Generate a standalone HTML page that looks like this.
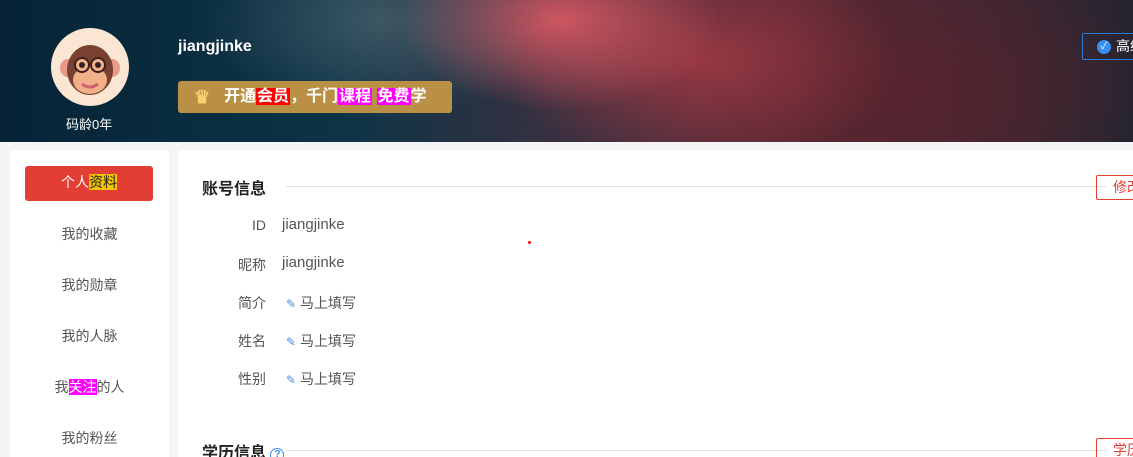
<!DOCTYPE html>
<html><head><meta charset="utf-8"><style>
*{margin:0;padding:0;box-sizing:border-box}
body{width:1133px;height:457px;overflow:hidden;background:#f4f5f7;font-family:"Liberation Sans","Noto Sans CJK SC",sans-serif;position:relative}
.ban{position:absolute;left:0;top:0;width:1133px;height:142px;background:
radial-gradient(ellipse 160px 90px at 560px 20px,rgba(220,90,100,.9),transparent),
radial-gradient(ellipse 200px 110px at 700px 60px,rgba(170,60,70,.8),transparent),
radial-gradient(ellipse 180px 100px at 380px 20px,rgba(90,110,120,.6),transparent),
radial-gradient(ellipse 250px 140px at 900px 90px,rgba(90,35,45,.8),transparent),
linear-gradient(90deg,#062336 0%,#0c3446 30%,#3a3040 50%,#5a2a36 70%,#3a2630 90%,#252530 100%)}
.av{position:absolute;left:51px;top:28px;width:78px;height:78px;border-radius:50%;background:#fbe6d3}
.t{position:absolute;color:#fff}
.vip{position:absolute;left:178px;top:81px;width:274px;height:32px;background:#b99045;border-radius:3px;color:#fff;font-weight:bold;font-size:16px;line-height:32px;padding-left:46px;white-space:nowrap}
.side{position:absolute;left:10px;top:150px;width:159px;height:307px;background:#fff}
.main{position:absolute;left:178px;top:150px;width:955px;height:307px;background:#fff;overflow:hidden}
.it{position:absolute;left:0;width:159px;text-align:center;font-size:14px;color:#555}
.lab{position:absolute;width:88px;text-align:right;font-size:14px;color:#555}
.val{position:absolute;left:104px;font-size:15px;color:#555}
.ed{position:absolute;left:108px;font-size:14px;color:#555;white-space:nowrap}
</style></head><body>
<div class="ban"></div>
<div class="av"><svg width="78" height="78" viewBox="0 0 78 78">
<ellipse cx="17" cy="40" rx="8" ry="9" fill="#e89a8a"/><ellipse cx="61" cy="40" rx="8" ry="9" fill="#e89a8a"/>
<ellipse cx="39" cy="42" rx="23" ry="25" fill="#7a4030"/>
<ellipse cx="39" cy="52" rx="17" ry="14" fill="#f0b08a"/>
<circle cx="31" cy="37" r="7" fill="#f0b08a" stroke="#3a2020" stroke-width="2"/><circle cx="47" cy="37" r="7" fill="#f0b08a" stroke="#3a2020" stroke-width="2"/>
<circle cx="31" cy="37" r="3" fill="#3a2020"/><circle cx="47" cy="37" r="3" fill="#3a2020"/>
<path d="M31 56 Q39 62 47 56" stroke="#d06070" stroke-width="3" fill="none"/></svg></div>
<div class="t" style="left:66px;top:114px;font-size:13px">码龄0年</div>
<div class="t" style="left:178px;top:38px;font-size:16px;font-weight:bold">jiangjinke</div>
<div class="vip"><span style="position:absolute;left:16px;top:0;font-size:18px;color:#f5d070">♛</span>开通<span style="background:#f00;padding:0 1px">会员</span>，千门<span style="background:#f0f;padding:0 1px">课程</span> <span style="background:#f0f;padding:0 1px">免费</span>学</div>
<div style="position:absolute;left:1082px;top:33px;width:80px;height:27px;border:1px solid #2a7ad8;border-radius:2px;color:#fff;font-size:14px;line-height:25px;padding-left:33px;white-space:nowrap"><span style="position:absolute;left:14px;top:6px;width:14px;height:14px;border-radius:50%;background:#3a8ef0;color:#fff;font-size:10px;line-height:14px;text-align:center">✓</span>高级</div>
<div class="side">
<div style="position:absolute;left:15px;top:16px;width:128px;height:35px;background:#e33e33;border-radius:3px;color:#fff;font-size:14px;text-align:center;line-height:33px">个人<span style="background:#f5c400;color:#222">资料</span></div>
<div class="it" style="top:74px">我的收藏</div>
<div class="it" style="top:125px">我的勋章</div>
<div class="it" style="top:176px">我的人脉</div>
<div class="it" style="top:227px">我<span style="background:#f0f;color:#fff">关注</span>的人</div>
<div class="it" style="top:278px">我的粉丝</div>
</div>
<div class="main">
<div style="position:absolute;left:24px;top:25px;font-size:16px;font-weight:bold;color:#222">账号信息</div>
<div style="position:absolute;left:108px;top:36px;width:820px;height:1px;background:#e0e0e0"></div>
<div style="position:absolute;left:918px;top:25px;width:60px;height:25px;border:1px solid #e33e33;border-radius:2px;color:#e33e33;font-size:14px;line-height:23px;padding-left:16px;white-space:nowrap">修改</div>
<div class="lab" style="top:67px">ID</div><div class="val" style="top:66px">jiangjinke</div>
<div class="lab" style="top:105px">昵称</div><div class="val" style="top:104px">jiangjinke</div>
<div class="lab" style="top:143px">简介</div><div class="ed" style="top:143px"><span style="color:#4a8ee0;font-size:12px">✎</span> 马上填写</div>
<div class="lab" style="top:181px">姓名</div><div class="ed" style="top:181px"><span style="color:#4a8ee0;font-size:12px">✎</span> 马上填写</div>
<div class="lab" style="top:219px">性别</div><div class="ed" style="top:219px"><span style="color:#4a8ee0;font-size:12px">✎</span> 马上填写</div>
<div style="position:absolute;left:350px;top:91px;width:3px;height:3px;border-radius:50%;background:#f00"></div>
<div style="position:absolute;left:24px;top:289px;font-size:16px;font-weight:bold;color:#222;white-space:nowrap">学历信息 <span style="display:inline-block;width:14px;height:14px;border:1px solid #3a8ef0;border-radius:50%;color:#3a8ef0;font-size:10px;line-height:12px;text-align:center;vertical-align:1px">?</span></div>
<div style="position:absolute;left:108px;top:300px;width:820px;height:1px;background:#e0e0e0"></div>
<div style="position:absolute;left:918px;top:288px;width:60px;height:25px;border:1px solid #e33e33;border-radius:2px;color:#e33e33;font-size:14px;line-height:23px;padding-left:16px;white-space:nowrap">学历</div>
</div>
</body></html>
